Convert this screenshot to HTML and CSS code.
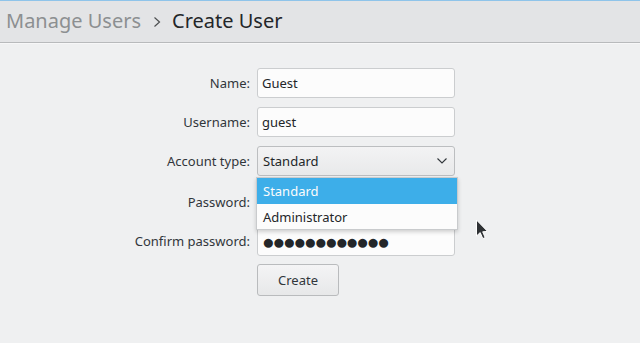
FILE: index.html
```html
<!DOCTYPE html>
<html lang="en">
<head>
    <meta charset="UTF-8">
    <title>Create User</title>
    <link rel="stylesheet" href="styles.css">
</head>
<body>
    <div class="header">
        <span class="crumb">Manage Users</span>
        <svg class="crumb-sep" width="10" height="12" viewBox="0 0 10 12">
            <path d="M2.5 1.5 L7.5 6 L2.5 10.5" fill="none" stroke="#4d4f51" stroke-width="1.2"/>
        </svg>
        <span class="crumb current">Create User</span>
    </div>

    <div class="form">
        <label class="label">Name:</label>
        <div class="field">Guest</div>

        <label class="label">Username:</label>
        <div class="field">guest</div>

        <label class="label">Account type:</label>
        <div class="combo-wrap">
            <div class="combo">
                <span>Standard</span>
                <svg width="12" height="8" viewBox="0 0 12 8">
                    <path d="M1.5 1.5 L6 6 L10.5 1.5" fill="none" stroke="#31363b" stroke-width="1.1"/>
                </svg>
            </div>
            <div class="popup">
                <div class="option selected">Standard</div>
                <div class="option">Administrator</div>
            </div>
        </div>

        <label class="label">Password:</label>
        <div class="field dots">●●●●●●●●●●●●</div>

        <label class="label">Confirm password:</label>
        <div class="field dots">●●●●●●●●●●●●</div>

        <div></div>
        <div><button class="btn">Create</button></div>
    </div>

    <svg class="cursor" width="14" height="22" viewBox="0 0 14 22">
        <path d="M1.5 1 L1.5 17 L5.2 13.6 L7.8 19.6 L10.2 18.6 L7.7 12.8 L12.6 12.4 Z" fill="#2f3235" stroke="#ffffff" stroke-width="1" stroke-linejoin="round"/>
    </svg>
</body>
</html>
```

FILE: styles.css
```css
body {
    margin: 0;
    padding: 0;
    width: 640px;
    height: 343px;
    overflow: hidden;
    background-color: #eff0f1;
    font-family: 'Noto Sans', 'Open Sans', sans-serif;
    color: #31363b;
    position: relative;
}
.header {
    display: flex;
    align-items: center;
    height: 41px;
    padding-left: 6px;
    background-color: #e3e4e6;
    border-top: 1px solid #8fc4ea;
    border-bottom: 1px solid #b8babc;
    box-shadow: 0 1px 0 #f7f7f8;
}
.crumb {
    font-size: 20px;
    color: #8c8f91;
    line-height: 1;
    padding-bottom: 2px;
}
.crumb.current {
    color: #232629;
}
.crumb-sep {
    margin: 0 10px 0 11px;
}
.form {
    display: grid;
    grid-template-columns: 250px 198px;
    column-gap: 7px;
    row-gap: 9px;
    margin-top: 25px;
    font-size: 13px;
}
.label {
    display: flex;
    align-items: center;
    justify-content: flex-end;
    height: 30px;
    color: #31363b;
}
.field {
    height: 28px;
    display: flex;
    align-items: center;
    padding-left: 4px;
    background-color: #fcfcfc;
    border: 1px solid #cbcdcf;
    border-radius: 3px;
    color: #232629;
}
.field.dots {
    font-size: 21px;
    letter-spacing: -2.2px;
    line-height: 1;
    color: #232629;
}
.combo-wrap {
    position: relative;
    height: 32px;
}
.combo {
    height: 28px;
    display: flex;
    align-items: center;
    justify-content: space-between;
    padding: 0 6px 0 5px;
    background: linear-gradient(#f3f3f4, #e8e9ea);
    border: 1px solid #bcbec0;
    border-radius: 3px;
    color: #232629;
}
.popup {
    position: absolute;
    left: -1px;
    top: 31px;
    width: 200px;
    background-color: #fcfcfc;
    border: 1px solid #c9cbcd;
    box-shadow: 0 2px 4px rgba(0, 0, 0, 0.18);
    z-index: 2;
}
.option {
    height: 25px;
    display: flex;
    align-items: center;
    padding-left: 6px;
    color: #232629;
}
.option.selected {
    background-color: #3daee9;
    color: #fcfcfc;
    height: 26px;
}
.btn {
    width: 82px;
    height: 32px;
    margin-top: -1px;
    font-family: 'Noto Sans', 'Open Sans', sans-serif;
    font-size: 13px;
    color: #31363b;
    background: linear-gradient(#f4f4f5, #e7e8e9);
    border: 1px solid #b9bbbd;
    border-radius: 3px;
}
.cursor {
    position: absolute;
    left: 475px;
    top: 219px;
}
```
